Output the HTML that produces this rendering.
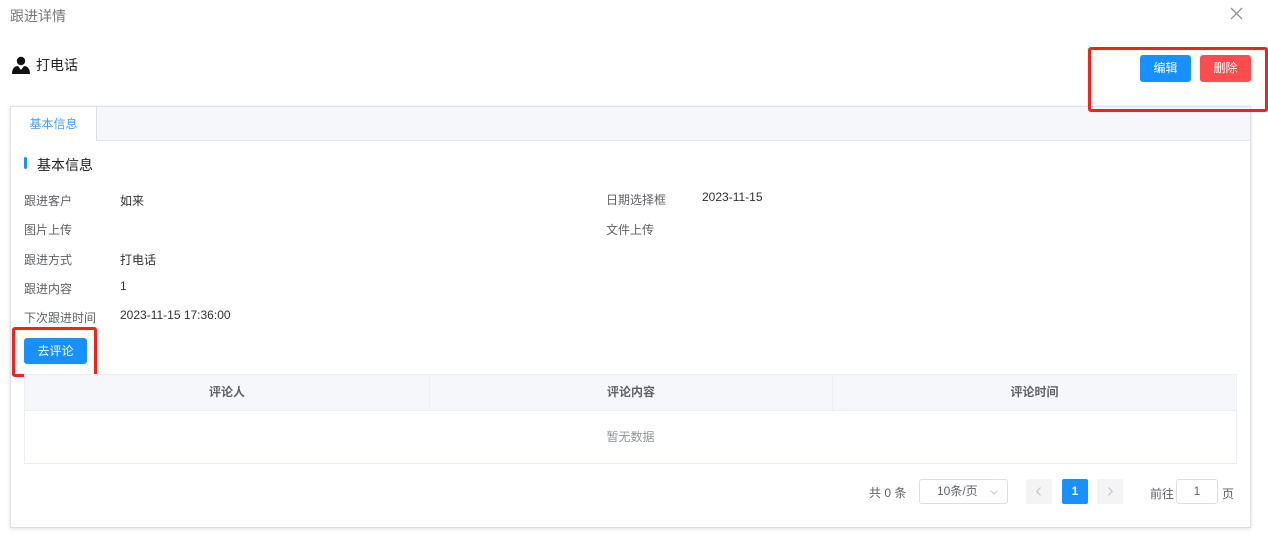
<!DOCTYPE html>
<html><head><meta charset="utf-8"><style>
*{margin:0;padding:0;box-sizing:border-box}
body{width:1268px;height:554px;background:#fff;font-family:"Liberation Sans","Noto Sans CJK SC",sans-serif;font-size:12px;color:#303133;position:relative;overflow:hidden}
.a{position:absolute;white-space:nowrap}
.btn{position:absolute;color:#fff;border-radius:3px;text-align:center;font-size:12px}
.lbl{color:#606266}
</style></head><body>
<div class="a" style="left:10px;top:6px;font-size:14px;color:#777">跟进详情</div>
<svg class="a" style="left:1230px;top:7px" width="13" height="13" viewBox="0 0 13 13"><path d="M1 1L12 12M12 1L1 12" stroke="#909399" stroke-width="1.3"/></svg>
<svg class="a" style="left:12px;top:56px" width="18" height="18" viewBox="0 0 18 18"><circle cx="9" cy="5" r="4.2" fill="#111"/><path d="M0 18C0 12 3 10 6 10L9 14L12 10C15 10 18 12 18 18Z" fill="#111"/></svg>
<div class="a" style="left:36px;top:55px;font-size:14px;color:#222">打电话</div>

<div class="a" style="left:10px;top:106px;width:1241px;height:422px;border:1px solid #dcdfe6;box-shadow:0 1px 4px rgba(0,0,0,.12)">
 <div style="height:34px;background:#f5f7fa;border-bottom:1px solid #e4e7ed;position:relative">
  <div style="position:absolute;left:0;top:0;width:86px;height:34px;background:#fff;border-right:1px solid #dcdfe6;color:#409eff;text-align:center;line-height:34px;font-size:12px">基本信息</div>
 </div>
</div>
<div class="a" style="left:1088px;top:47px;width:180px;height:65px;border:3px solid #f5221b;border-radius:3px"></div>
<div class="btn" style="left:1140px;top:55px;width:51px;height:27px;line-height:27px;background:#1890ff">编辑</div>
<div class="btn" style="left:1200px;top:55px;width:51px;height:27px;line-height:27px;background:#ff4d4f">删除</div>
<div class="a" style="left:24px;top:157px;width:3px;height:12px;background:#1890ff;border-radius:2px"></div>
<div class="a" style="left:37px;top:155px;font-size:14px;color:#222">基本信息</div>
<div class="a lbl" style="left:24px;top:192px">跟进客户</div><div class="a" style="left:120px;top:192px">如来</div>
<div class="a lbl" style="left:606px;top:191px">日期选择框</div><div class="a" style="left:702px;top:190px">2023-11-15</div>
<div class="a lbl" style="left:24px;top:221px">图片上传</div>
<div class="a lbl" style="left:606px;top:221px">文件上传</div>
<div class="a lbl" style="left:24px;top:251px">跟进方式</div><div class="a" style="left:120px;top:251px">打电话</div>
<div class="a lbl" style="left:24px;top:280px">跟进内容</div><div class="a" style="left:120px;top:279px">1</div>
<div class="a lbl" style="left:24px;top:309px">下次跟进时间</div><div class="a" style="left:120px;top:308px">2023-11-15 17:36:00</div>
<div class="a" style="left:12px;top:327px;width:85px;height:50px;border:3px solid #f5221b;border-radius:3px"></div>
<div class="btn" style="left:24px;top:338px;width:63px;height:26px;line-height:26px;background:#1890ff">去评论</div>

<div class="a" style="left:24px;top:374px;width:1213px;height:90px;border:1px solid #ebeef5;background:#fff">
 <div style="height:36px;background:#f5f7fa;border-bottom:1px solid #ebeef5;display:flex;font-weight:bold;color:#606266">
  <div style="width:405px;text-align:center;line-height:35px;border-right:1px solid #ebeef5">评论人</div>
  <div style="width:403px;text-align:center;line-height:35px;border-right:1px solid #ebeef5">评论内容</div>
  <div style="flex:1;text-align:center;line-height:35px">评论时间</div>
 </div>
 <div style="text-align:center;line-height:52px;color:#909399">暂无数据</div>
</div>

<div class="a lbl" style="left:869px;top:484px">共 0 条</div>
<div class="a" style="left:919px;top:479px;width:89px;height:25px;border:1px solid #dcdfe6;border-radius:3px;line-height:23px;padding-left:17px;color:#606266">10条/页<svg style="position:absolute;right:9px;top:10px" width="8" height="5" viewBox="0 0 8 5"><path d="M0.5 0.5L4 4L7.5 0.5" fill="none" stroke="#c0c4cc"/></svg></div>
<div class="a" style="left:1026px;top:479px;width:26px;height:25px;background:#f4f4f5;border-radius:2px"><svg style="position:absolute;left:10px;top:8px" width="5" height="9" viewBox="0 0 5 9"><path d="M4.5 0.5L0.8 4.5L4.5 8.5" fill="none" stroke="#c0c4cc" stroke-width="1.2"/></svg></div>
<div class="a" style="left:1062px;top:479px;width:26px;height:25px;background:#1890ff;border-radius:2px;color:#fff;text-align:center;line-height:25px;font-weight:bold">1</div>
<div class="a" style="left:1097px;top:479px;width:26px;height:25px;background:#f4f4f5;border-radius:2px"><svg style="position:absolute;left:11px;top:8px" width="5" height="9" viewBox="0 0 5 9"><path d="M0.5 0.5L4.2 4.5L0.5 8.5" fill="none" stroke="#c0c4cc" stroke-width="1.2"/></svg></div>
<div class="a lbl" style="left:1150px;top:485px">前往</div>
<div class="a" style="left:1176px;top:479px;width:42px;height:25px;border:1px solid #dcdfe6;border-radius:3px;text-align:center;line-height:23px;color:#606266">1</div>
<div class="a lbl" style="left:1222px;top:485px">页</div>
</body></html>
